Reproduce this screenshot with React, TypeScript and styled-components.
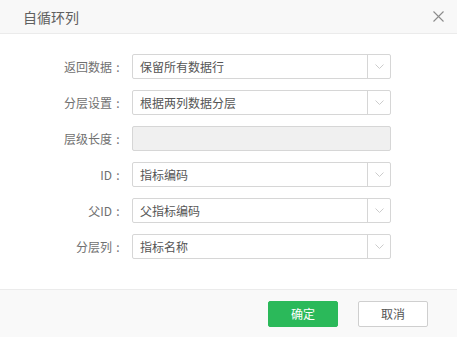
import React from 'react';
import styled, { createGlobalStyle } from 'styled-components';

const GlobalStyle = createGlobalStyle`
  html, body {
    margin: 0;
    padding: 0;
    background: #ffffff;
  }
  body {
    font-family: "Noto Sans CJK SC", "Liberation Sans", sans-serif;
  }
`;

type Field = {
  label: string;
  value?: string;
  disabled?: boolean;
};

const fields: Field[] = [
  { label: '返回数据', value: '保留所有数据行' },
  { label: '分层设置', value: '根据两列数据分层' },
  { label: '层级长度', disabled: true },
  { label: 'ID', value: '指标编码' },
  { label: '父ID', value: '父指标编码' },
  { label: '分层列', value: '指标名称' },
];

const ChevronDown = () => (
  <svg width="9" height="5" viewBox="0 0 9 5" fill="none">
    <path d="M0.5 0.5L4.5 4.5L8.5 0.5" stroke="#cccccc" strokeWidth="1" />
  </svg>
);

const CloseIcon = () => (
  <svg width="11" height="11" viewBox="0 0 11 11" fill="none">
    <path d="M0.5 0.5L10.5 10.5M10.5 0.5L0.5 10.5" stroke="#8c8c8c" strokeWidth="1.1" />
  </svg>
);

const App = () => {
  return (
    <>
      <GlobalStyle />
      <Dialog>
        <Header>
          <Title>自循环列</Title>
          <CloseButton>
            <CloseIcon />
          </CloseButton>
        </Header>
        <Body>
          {fields.map((f) => (
            <Row key={f.label}>
              <Label>
                {f.label}
                <Colon>:</Colon>
              </Label>
              {f.disabled ? (
                <DisabledInput />
              ) : (
                <Select>
                  <SelectValue>{f.value}</SelectValue>
                  <Arrow>
                    <ChevronDown />
                  </Arrow>
                </Select>
              )}
            </Row>
          ))}
        </Body>
        <Footer>
          <Button primary>确定</Button>
          <Button>取消</Button>
        </Footer>
      </Dialog>
    </>
  );
};
export default App;

const Dialog = styled.div`
  width: 457px;
  height: 337px;
  display: flex;
  flex-direction: column;
  background: #ffffff;
  overflow: hidden;
`;

const Header = styled.div`
  height: 33px;
  flex: none;
  display: flex;
  align-items: center;
  justify-content: space-between;
  padding: 0 12px 0 23px;
  background: #f8f8f8;
  border-bottom: 1px solid #ebebeb;
`;

const Title = styled.div`
  font-size: 14px;
  color: #606060;
  line-height: 1;
`;

const CloseButton = styled.div`
  width: 11px;
  height: 11px;
  display: flex;
  margin-right: 1px;
`;

const Body = styled.div`
  flex: 1;
  display: flex;
  flex-direction: column;
  gap: 11px;
  padding-top: 20px;
`;

const Row = styled.div`
  display: flex;
  align-items: center;
  height: 25px;
`;

const Label = styled.div`
  width: 132px;
  flex: none;
  display: flex;
  justify-content: flex-end;
  padding-right: 8px;
  box-sizing: border-box;
  font-size: 12px;
  color: #707070;
  white-space: nowrap;
`;

const Colon = styled.span`
  width: 12px;
  display: inline-flex;
  justify-content: center;
`;

const Select = styled.div`
  width: 259px;
  height: 25px;
  box-sizing: border-box;
  border: 1px solid #d6d6d6;
  border-radius: 2px;
  display: flex;
  align-items: stretch;
  background: #ffffff;
`;

const SelectValue = styled.div`
  flex: 1;
  display: flex;
  align-items: center;
  padding-left: 7px;
  font-size: 12px;
  color: #555555;
`;

const Arrow = styled.div`
  width: 22px;
  flex: none;
  border-left: 1px solid #d6d6d6;
  display: flex;
  align-items: center;
  justify-content: center;
`;

const DisabledInput = styled.div`
  width: 259px;
  height: 25px;
  box-sizing: border-box;
  border: 1px solid #d6d6d6;
  border-radius: 2px;
  background: #f0f0f0;
`;

const Footer = styled.div`
  height: 47px;
  flex: none;
  display: flex;
  align-items: center;
  justify-content: flex-end;
  gap: 20px;
  padding-right: 29px;
  background: #f9f9f9;
  border-top: 1px solid #ebebeb;
`;

const Button = styled.div<{ primary?: boolean }>`
  width: 70px;
  height: 26px;
  box-sizing: border-box;
  border-radius: 2px;
  display: flex;
  align-items: center;
  justify-content: center;
  font-size: 12px;
  background: ${(p) => (p.primary ? '#2bb95a' : '#ffffff')};
  color: ${(p) => (p.primary ? '#ffffff' : '#555555')};
  border: 1px solid ${(p) => (p.primary ? '#2bb95a' : '#cfcfcf')};
`;
